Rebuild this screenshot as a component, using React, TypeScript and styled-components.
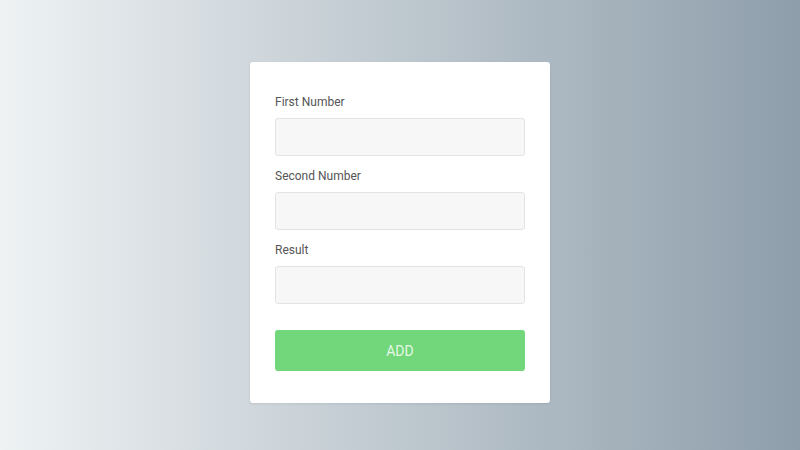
import styled, { createGlobalStyle } from "styled-components";

const GlobalStyle = createGlobalStyle`
    html, body {
        margin: 0;
        padding: 0;
    }
    body {
        font-family: Roboto, "Liberation Sans", sans-serif;
    }
`;

const Page = styled.div`
    display: flex;
    justify-content: center;
    align-items: center;
    box-sizing: border-box;
    width: 100%;
    height: 450px;
    padding-top: 15px;
    background: linear-gradient(to right, #eef2f3, #8e9eab);
`;

const Card = styled.form`
    display: flex;
    flex-direction: column;
    box-sizing: border-box;
    width: 300px;
    padding: 30px 25px 32px;
    background-color: #fff;
    border-radius: 3px;
    box-shadow: 0 1px 3px rgba(0, 0, 0, 0.08);
`;

const Field = styled.div`
    display: flex;
    flex-direction: column;
    gap: 6px;
    margin-bottom: 10px;
`;

const Label = styled.label`
    font-size: 12px;
    line-height: 20px;
    color: #555;
`;

const Input = styled.input`
    box-sizing: border-box;
    width: 100%;
    height: 38px;
    padding: 0 10px;
    font-family: inherit;
    font-size: 14px;
    background-color: #f7f7f7;
    border: 1px solid #e3e3e3;
    border-radius: 3px;
    outline: none;
`;

const Button = styled.button`
    box-sizing: border-box;
    height: 41px;
    margin-top: 16px;
    font-family: inherit;
    font-size: 14px;
    color: #e4f8e5;
    background-color: #72d67a;
    border: none;
    border-radius: 3px;
    cursor: pointer;
`;

export default function App() {
    return (
        <>
            <GlobalStyle />
            <Page>
                <Card onSubmit={(e) => e.preventDefault()}>
                    <Field>
                        <Label>First Number</Label>
                        <Input type="text" />
                    </Field>
                    <Field>
                        <Label>Second Number</Label>
                        <Input type="text" />
                    </Field>
                    <Field>
                        <Label>Result</Label>
                        <Input type="text" readOnly />
                    </Field>
                    <Button type="submit">ADD</Button>
                </Card>
            </Page>
        </>
    );
}
